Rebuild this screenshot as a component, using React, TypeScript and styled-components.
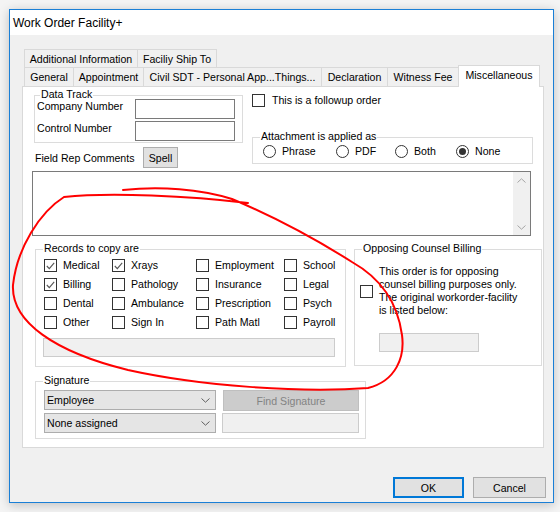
import React from "react";
import styled, { createGlobalStyle } from "styled-components";

const GlobalStyle = createGlobalStyle`
  html, body { margin: 0; padding: 0; }
  body {
    background: #f4f4f4;
    font-family: "Liberation Sans", Arial, sans-serif;
    font-size: 10.6px;
    color: #000;
  }
  * { box-sizing: border-box; }
`;

const Screen = styled.div`
  position: relative;
  width: 560px;
  height: 512px;
  overflow: hidden;
  padding: 9px 0 0 9px;
`;

const Window = styled.div`
  width: 545px;
  height: 494px;
  border: 1px solid #1a7fd6;
  background: #f0f0f0;
  box-shadow: 0 2px 10px rgba(0, 0, 0, 0.22);
  display: flex;
  flex-direction: column;
`;

const TitleBar = styled.div`
  height: 25px;
  flex: none;
  background: #fff;
  display: flex;
  align-items: center;
  padding: 1px 0 0 3px;
  font-size: 12px;
`;

const Body = styled.div`
  flex: 1;
  display: flex;
  flex-direction: column;
  padding: 14px 0 0 12px;
`;

const TabStrip = styled.div`
  margin-left: 2px;
  display: flex;
  flex-direction: column;
`;

const TabRow = styled.div<{ $h: number }>`
  display: flex;
  align-items: flex-start;
  height: ${(p) => p.$h}px;
`;

const Tab = styled.div<{ $w: number; $active?: boolean }>`
  position: relative;
  width: ${(p) => p.$w}px;
  height: ${(p) => (p.$active ? "22px" : "100%")};
  margin-top: ${(p) => (p.$active ? "-2px" : "0")};
  margin-right: -1px;
  border: 1px solid #d9d9d9;
  border-bottom: none;
  background: ${(p) => (p.$active ? "#fff" : "#f0f0f0")};
  z-index: ${(p) => (p.$active ? 2 : 1)};
  display: flex;
  align-items: center;
  justify-content: center;
  padding-bottom: ${(p) => (p.$active ? "3px" : "0")};
  white-space: nowrap;
  overflow: hidden;
`;

const Panel = styled.div`
  width: 522px;
  height: 362px;
  border: 1px solid #d9d9d9;
  background: #fff;
  display: flex;
  flex-direction: column;
`;

const TopArea = styled.div`
  display: flex;
  height: 81px;
`;

const LeftCol = styled.div`
  width: 229px;
  display: flex;
  flex-direction: column;
`;

const RightCol = styled.div`
  flex: 1;
  display: flex;
  flex-direction: column;
`;

const Group = styled.div<{ $w: number; $h: number }>`
  position: relative;
  width: ${(p) => p.$w}px;
  height: ${(p) => p.$h}px;
  border: 1px solid #dcdcdc;
`;

const Legend = styled.span<{ $left?: number }>`
  position: absolute;
  top: -8px;
  left: ${(p) => p.$left ?? 7}px;
  padding: 0 1px;
  line-height: 13px;
  background: #fff;
  white-space: nowrap;
`;

const DataTrack = styled(Group)`
  margin: 8px 0 0 11px;
`;

const FieldGrid = styled.div`
  display: grid;
  grid-template-columns: 98px 100px;
  row-gap: 2px;
  padding: 3px 0 0 2px;
  align-items: start;
`;

const FieldLabel = styled.span`
  padding-top: 1px;
  line-height: 13px;
  white-space: nowrap;
`;

const TextInput = styled.div<{ $w: number; $disabled?: boolean }>`
  width: ${(p) => p.$w}px;
  height: 20px;
  border: 1px solid ${(p) => (p.$disabled ? "#cccccc" : "#7a7a7a")};
  background: ${(p) => (p.$disabled ? "#f0f0f0" : "#fff")};
`;

const FieldRepRow = styled.div`
  display: flex;
  align-items: center;
  margin: 4px 0 0 12px;
`;

const RepLabel = styled.span`
  width: 108px;
  white-space: nowrap;
`;

const Button = styled.div<{ $w: number; $primary?: boolean; $disabled?: boolean }>`
  width: ${(p) => p.$w}px;
  height: 21px;
  display: flex;
  align-items: center;
  justify-content: center;
  background: ${(p) => (p.$disabled ? "#cccccc" : "#e1e1e1")};
  color: ${(p) => (p.$disabled ? "#838383" : "#000")};
  border: ${(p) => (p.$primary ? "2px solid #0078d7" : p.$disabled ? "1px solid #bfbfbf" : "1px solid #adadad")};
  white-space: nowrap;
`;

const CheckRow = styled.label<{ $gap?: number }>`
  display: flex;
  align-items: center;
  gap: ${(p) => p.$gap ?? 6}px;
  white-space: nowrap;
  line-height: 13px;
`;

const Box = styled.span`
  width: 13px;
  height: 13px;
  flex: none;
  border: 1px solid #333;
  background: #fff;
  display: flex;
  align-items: center;
  justify-content: center;
`;

const Round = styled.span<{ $on?: boolean }>`
  width: 13px;
  height: 13px;
  flex: none;
  border-radius: 50%;
  border: 1px solid #333;
  background: #fff;
  display: flex;
  align-items: center;
  justify-content: center;
  &::after {
    content: "";
    width: 7px;
    height: 7px;
    border-radius: 50%;
    background: ${(p) => (p.$on ? "#333" : "transparent")};
  }
`;

const FollowupRow = styled(CheckRow)`
  margin-top: 7px;
`;

const AttachGroup = styled(Group)`
  margin-top: 30px;
`;

const RadioRow = styled.div`
  display: flex;
  padding: 7px 0 0 10px;
`;

const RadioItem = styled(CheckRow)<{ $w?: number }>`
  width: ${(p) => (p.$w ? `${p.$w}px` : "auto")};
`;

const CommentsBox = styled.div`
  margin: 3px 0 0 9px;
  width: 499px;
  height: 65px;
  border: 1px solid #7a7a7a;
  display: flex;
  justify-content: flex-end;
`;

const ScrollBar = styled.div`
  width: 17px;
  height: 100%;
  background: #f0f0f0;
  display: flex;
  flex-direction: column;
  justify-content: space-between;
  align-items: center;
  padding: 6px 0 5px;
`;

const LowerRow = styled.div`
  display: flex;
  align-items: flex-start;
  margin: 13px 0 0 12px;
`;

const RecordsGroup = styled(Group)`
  padding: 6px 0 0 8px;
`;

const RecordsGrid = styled.div`
  display: grid;
  grid-template-columns: 68px 84px 88px 1fr;
  grid-auto-rows: 19px;
  align-items: center;
`;

const RecordsField = styled(TextInput)`
  margin: 6px 0 0 -1px;
  height: 19px;
`;

const OpposingGroup = styled(Group)`
  margin-left: 8px;
  padding: 15px 0 0 5px;
`;

const OpposingText = styled.div`
  line-height: 13px;
  white-space: nowrap;
`;

const OpposingField = styled(TextInput)`
  margin: 16px 0 0 19px;
  height: 19px;
`;

const SignatureGroup = styled(Group)`
  margin: 14px 0 0 12px;
  padding: 8px 0 0 8px;
`;

const SignatureGrid = styled.div`
  display: grid;
  grid-template-columns: 172px 137px;
  grid-auto-rows: 20px;
  column-gap: 6px;
  row-gap: 3px;
`;

const Combo = styled.div`
  height: 20px;
  border: 1px solid #adadad;
  background: #e5e5e5;
  display: flex;
  align-items: center;
  justify-content: space-between;
  padding: 0 5px 0 2px;
`;

const FindButton = styled(Button)`
  margin-left: 1px;
`;

const ButtonBar = styled.div`
  display: flex;
  justify-content: flex-end;
  gap: 9px;
  margin-top: 29px;
  padding-right: 7px;
`;

const Scribble = styled.svg`
  position: absolute;
  left: 0;
  top: 0;
  pointer-events: none;
  z-index: 10;
`;

const Check = ({ on }: { on?: boolean }) => (
  <Box>
    {on && (
      <svg width="9" height="8" viewBox="0 0 9 8">
        <path d="M0.8 4 L3.3 6.6 L8.2 0.9" fill="none" stroke="#555" strokeWidth="1.1" />
      </svg>
    )}
  </Box>
);

const Chevron = ({ up, color = "#606060" }: { up?: boolean; color?: string }) => (
  <svg width="9" height="5" viewBox="0 0 9 5">
    <path d={up ? "M0.5 4.5 L4.5 0.8 L8.5 4.5" : "M0.5 0.5 L4.5 4.2 L8.5 0.5"} fill="none" stroke={color} strokeWidth="1" />
  </svg>
);

const RECORDS: [string, boolean][] = [
  ["Medical", true], ["Xrays", true], ["Employment", false], ["School", false],
  ["Billing", true], ["Pathology", false], ["Insurance", false], ["Legal", false],
  ["Dental", false], ["Ambulance", false], ["Prescription", false], ["Psych", false],
  ["Other", false], ["Sign In", false], ["Path Matl", false], ["Payroll", false],
];

const TOP_TABS: [string, number][] = [
  ["Additional Information", 114],
  ["Faciliy Ship To", 80],
];

const BOTTOM_TABS: [string, number][] = [
  ["General", 50],
  ["Appointment", 71],
  ["Civil SDT - Personal App...Things...", 179],
  ["Declaration", 67],
  ["Witness Fee", 72],
  ["Miscellaneous", 82],
];

export default function App() {
  return (
    <>
      <GlobalStyle />
      <Screen>
        <Window>
          <TitleBar>Work Order Facility+</TitleBar>
          <Body>
            <TabStrip>
              <TabRow $h={18}>
                {TOP_TABS.map(([t, w]) => (
                  <Tab key={t} $w={w}>{t}</Tab>
                ))}
              </TabRow>
              <TabRow $h={19}>
                {BOTTOM_TABS.map(([t, w]) => (
                  <Tab key={t} $w={w} $active={t === "Miscellaneous"}>{t}</Tab>
                ))}
              </TabRow>
            </TabStrip>

            <Panel>
              <TopArea>
                <LeftCol>
                  <DataTrack $w={209} $h={48}>
                    <Legend $left={5}>Data Track</Legend>
                    <FieldGrid>
                      <FieldLabel>Company Number</FieldLabel>
                      <TextInput $w={100} />
                      <FieldLabel>Control Number</FieldLabel>
                      <TextInput $w={100} />
                    </FieldGrid>
                  </DataTrack>
                  <FieldRepRow>
                    <RepLabel>Field Rep Comments</RepLabel>
                    <Button $w={35}>Spell</Button>
                  </FieldRepRow>
                </LeftCol>
                <RightCol>
                  <FollowupRow $gap={7}>
                    <Check />
                    This is a followup order
                  </FollowupRow>
                  <AttachGroup $w={281} $h={27}>
                    <Legend>Attachment is applied as</Legend>
                    <RadioRow>
                      <RadioItem $w={73}><Round />Phrase</RadioItem>
                      <RadioItem $w={59}><Round />PDF</RadioItem>
                      <RadioItem $w={61}><Round />Both</RadioItem>
                      <RadioItem><Round $on />None</RadioItem>
                    </RadioRow>
                  </AttachGroup>
                </RightCol>
              </TopArea>

              <CommentsBox>
                <ScrollBar>
                  <Chevron up color="#a6a6a6" />
                  <Chevron color="#a6a6a6" />
                </ScrollBar>
              </CommentsBox>

              <LowerRow>
                <RecordsGroup $w={311} $h={118}>
                  <Legend>Records to copy are</Legend>
                  <RecordsGrid>
                    {RECORDS.map(([name, on]) => (
                      <CheckRow key={name}>
                        <Check on={on} />
                        {name}
                      </CheckRow>
                    ))}
                  </RecordsGrid>
                  <RecordsField $w={292} $disabled />
                </RecordsGroup>
                <OpposingGroup $w={188} $h={117}>
                  <Legend>Opposing Counsel Billing</Legend>
                  <CheckRow>
                    <Check />
                    <OpposingText>
                      This order is for opposing
                      <br />
                      counsel billing purposes only.
                      <br />
                      The original workorder-facility
                      <br />
                      is listed below:
                    </OpposingText>
                  </CheckRow>
                  <OpposingField $w={100} $disabled />
                </OpposingGroup>
              </LowerRow>

              <SignatureGroup $w={331} $h={58}>
                <Legend>Signature</Legend>
                <SignatureGrid>
                  <Combo>
                    Employee
                    <Chevron />
                  </Combo>
                  <FindButton $w={136} $disabled>Find Signature</FindButton>
                  <Combo>
                    None assigned
                    <Chevron />
                  </Combo>
                  <TextInput $w={137} $disabled />
                </SignatureGrid>
              </SignatureGroup>
            </Panel>

            <ButtonBar>
              <Button $w={71} $primary>OK</Button>
              <Button $w={73}>Cancel</Button>
            </ButtonBar>
          </Body>
        </Window>

        <Scribble width="560" height="512" viewBox="0 0 560 512">
          <path
            d="M 248 203 C 190 196, 110 192, 64 197 C 40 212, 17 248, 13 285 C 11 322, 55 352, 128 370 C 200 386, 300 393, 368 388 C 396 381, 405 357, 402 335 C 398 305, 384 280, 352 262 C 322 243, 282 220, 232 199 C 200 189, 160 186, 123 190"
            fill="none"
            stroke="#ff0000"
            strokeWidth="2"
            strokeLinecap="round"
          />
        </Scribble>
      </Screen>
    </>
  );
}
